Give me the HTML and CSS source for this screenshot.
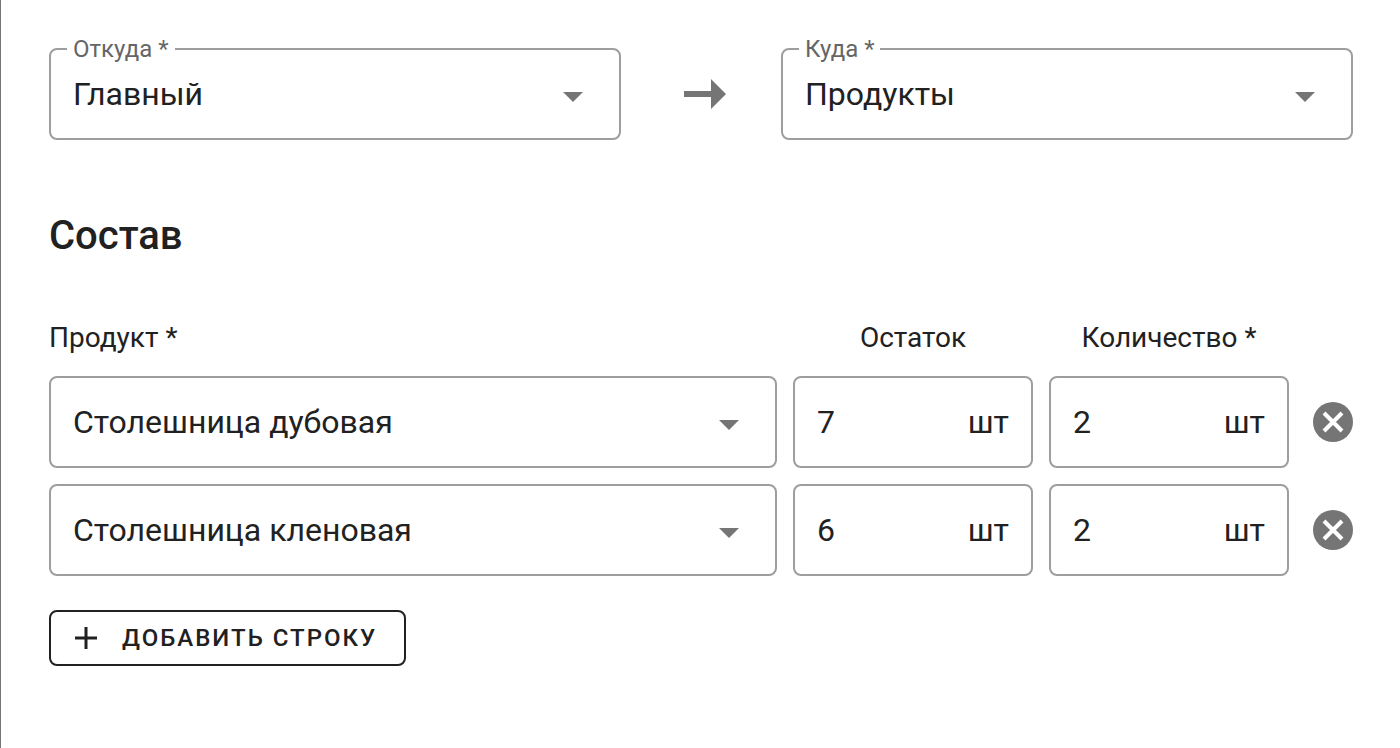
FILE: index.html
```html
<!DOCTYPE html>
<html lang="ru">
<head>
<meta charset="utf-8">
<meta name="viewport" content="width=device-width, initial-scale=1">
<title>Перемещение</title>
<link rel="stylesheet" href="styles.css">
</head>
<body>
<form class="transfer">
  <div class="route">
    <fieldset class="outlined">
      <legend class="outlined-legend"><label for="from">Откуда *</label></legend>
      <div class="picker">
        <select class="control" id="from"><option>Главный</option></select>
        <svg class="caret" viewBox="0 0 20 10" aria-hidden="true"><path d="M0 0h20L10 10z"/></svg>
      </div>
    </fieldset>
    <svg class="arrow" viewBox="0 0 42 30" aria-hidden="true"><path d="M0 12h27V0l15 15-15 15V18H0z"/></svg>
    <fieldset class="outlined">
      <legend class="outlined-legend"><label for="to">Куда *</label></legend>
      <div class="picker">
        <select class="control" id="to"><option>Продукты</option></select>
        <svg class="caret" viewBox="0 0 20 10" aria-hidden="true"><path d="M0 0h20L10 10z"/></svg>
      </div>
    </fieldset>
  </div>

  <h2 class="title">Состав</h2>

  <div class="line line-head">
    <label for="product-1">Продукт *</label>
    <label class="centered" for="stock-1">Остаток</label>
    <label class="centered" for="count-1">Количество *</label>
  </div>

  <div class="lines">
    <div class="line">
      <div class="box picker">
        <select class="control" id="product-1"><option>Столешница дубовая</option></select>
        <svg class="caret" viewBox="0 0 20 10" aria-hidden="true"><path d="M0 0h20L10 10z"/></svg>
      </div>
      <div class="box amount"><input class="control" id="stock-1" type="text" value="7" readonly><span>шт</span></div>
      <div class="box amount"><input class="control" id="count-1" type="text" inputmode="numeric" value="2"><span>шт</span></div>
      <button class="remove" type="button" aria-label="Удалить строку">
        <svg viewBox="0 0 40 40" aria-hidden="true"><circle cx="20" cy="20" r="20"/><path d="M11 11l18 18M29 11L11 29"/></svg>
      </button>
    </div>
    <div class="line">
      <div class="box picker">
        <select class="control" aria-label="Продукт"><option>Столешница кленовая</option></select>
        <svg class="caret" viewBox="0 0 20 10" aria-hidden="true"><path d="M0 0h20L10 10z"/></svg>
      </div>
      <div class="box amount"><input class="control" aria-label="Остаток" type="text" value="6" readonly><span>шт</span></div>
      <div class="box amount"><input class="control" aria-label="Количество" type="text" inputmode="numeric" value="2"><span>шт</span></div>
      <button class="remove" type="button" aria-label="Удалить строку">
        <svg viewBox="0 0 40 40" aria-hidden="true"><circle cx="20" cy="20" r="20"/><path d="M11 11l18 18M29 11L11 29"/></svg>
      </button>
    </div>
  </div>

  <button class="add" type="button">
    <svg class="plus" viewBox="0 0 22 22" aria-hidden="true"><path d="M11 0v22M0 11h22"/></svg>
    Добавить строку
  </button>
</form>
</body>
</html>
```
FILE: styles.css
```css
* {
  box-sizing: border-box;
}

body {
  margin: 0;
  background: #fff;
  color: #212121;
  font-family: Roboto, "Noto Sans", sans-serif;
  font-size: 32px;
}

.transfer {
  min-height: 100vh;
  padding: 35px 47px 48px 48px;
  border-left: 1px solid #757575;
}

.route {
  display: grid;
  grid-template-columns: 1fr 160px 1fr;
}

.outlined {
  min-width: 0;
  margin: 0;
  padding: 0 16px 14px;
  border: 2px solid #9e9e9e;
  border-radius: 8px;
}

.outlined-legend {
  padding: 0 6px;
  color: #666;
  font-size: 24px;
  line-height: 28px;
}

.outlined .picker {
  height: 61px;
  padding: 0 6px;
}

.picker {
  display: grid;
  align-items: center;
}

.picker > * {
  grid-area: 1 / 1;
}

.control {
  width: 100%;
  min-width: 0;
  height: 100%;
  margin: 0;
  padding: 0;
  border: 0;
  outline: 0;
  appearance: none;
  background: transparent;
  color: inherit;
  font: inherit;
}

.caret {
  width: 20px;
  height: 10px;
  margin: 6px 14px 0 0;
  justify-self: end;
  fill: #757575;
  pointer-events: none;
}

.arrow {
  width: 42px;
  height: 30px;
  margin: 44px 0 0 8px;
  justify-self: center;
  fill: #757575;
}

.title {
  margin: 72px 0 0;
  font-size: 40px;
  font-weight: 500;
  line-height: 48px;
}

.line {
  display: grid;
  grid-template-columns: 1fr 240px 240px 48px;
  gap: 16px;
  align-items: center;
}

.line-head {
  margin: 60px 0 20px;
  font-size: 28px;
  line-height: 36px;
}

.centered {
  text-align: center;
}

.lines {
  display: grid;
  gap: 16px;
}

.box {
  height: 92px;
  padding: 0 22px;
  border: 2px solid #9e9e9e;
  border-radius: 8px;
}

.amount {
  display: flex;
  align-items: center;
}

.remove {
  width: 40px;
  height: 40px;
  padding: 0;
  border: 0;
  border-radius: 50%;
  justify-self: end;
  background: transparent;
}

.remove svg {
  display: block;
  fill: #757575;
  stroke-width: 4;
}

.remove path {
  stroke: #fff;
}

.add {
  display: flex;
  align-items: center;
  gap: 25px;
  height: 56px;
  margin-top: 34px;
  padding: 0 27px 0 24px;
  border: 2px solid #212121;
  border-radius: 8px;
  background: transparent;
  color: inherit;
  font: 500 24px Roboto, "Noto Sans", sans-serif;
  letter-spacing: 2px;
  text-transform: uppercase;
}

.plus {
  width: 22px;
  height: 22px;
  fill: none;
  stroke: #212121;
  stroke-width: 3;
}
```
